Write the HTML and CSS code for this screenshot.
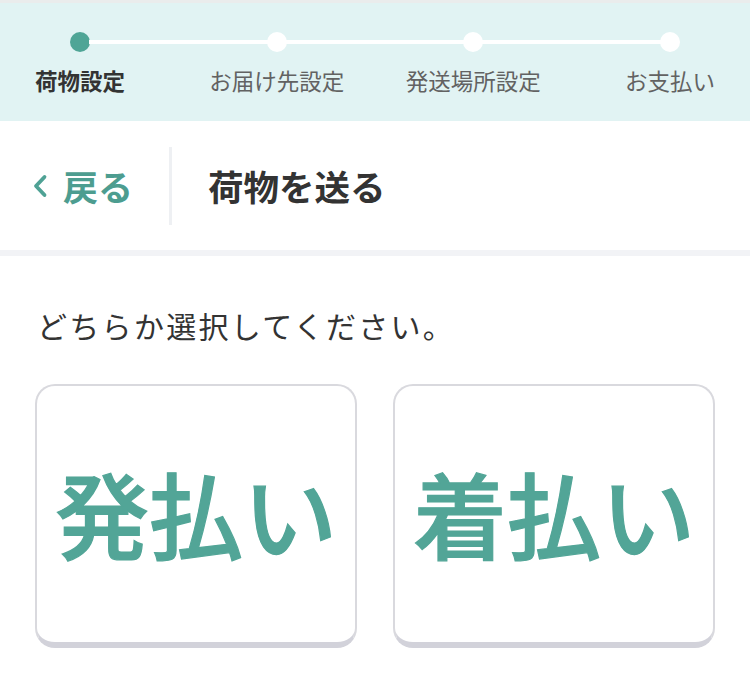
FILE: index.html
```html
<!DOCTYPE html>
<html lang="ja">
<head>
<meta charset="utf-8">
<title>荷物を送る</title>
<link rel="stylesheet" href="styles.css">
</head>
<body>
<div class="topline"></div>
<section class="stepper">
  <div class="track">
    <span class="dot active"></span><span class="seg"></span>
    <span class="dot"></span><span class="seg"></span>
    <span class="dot"></span><span class="seg"></span>
    <span class="dot"></span>
  </div>
  <div class="labels">
    <div class="step"><span class="label active">荷物設定</span></div>
    <div class="step"><span class="label">お届け先設定</span></div>
    <div class="step"><span class="label">発送場所設定</span></div>
    <div class="step"><span class="label">お支払い</span></div>
  </div>
</section>
<header class="header">
  <a class="back">
    <svg class="chev" width="16" height="26" viewBox="0 0 16 26"><polyline points="12.5,4 4,13 12.5,22" fill="none" stroke="#4fa295" stroke-width="3.8" stroke-linecap="round" stroke-linejoin="round"/></svg>
    <span class="back-text">戻る</span>
  </a>
  <div class="divider"></div>
  <h1 class="title">荷物を送る</h1>
</header>
<main class="content">
  <p class="prompt">どちらか選択してください。</p>
  <div class="choices">
    <button class="card">発払い</button>
    <button class="card">着払い</button>
  </div>
</main>
</body>
</html>
```
FILE: styles.css
```css
html, body {
  margin: 0;
  padding: 0;
  background: #ffffff;
  font-family: "Noto Sans CJK JP", "Noto Sans", sans-serif;
  color: #333333;
}

.topline {
  height: 3px;
  background: #eaecec;
}

.stepper {
  background: #e1f3f3;
  padding: 29px 0 26px;
}

.track {
  display: flex;
  align-items: center;
  padding: 0 70px;
}

.dot {
  width: 20px;
  height: 20px;
  border-radius: 50%;
  background: #ffffff;
  flex: none;
}

.dot.active {
  background: #4fa596;
}

.seg {
  flex: 1;
  height: 4px;
  background: #ffffff;
  margin: 0 -1px;
}

.labels {
  display: flex;
  justify-content: space-between;
  padding: 0 80px;
  margin-top: 13px;
}

.step {
  width: 0;
  display: flex;
  justify-content: center;
}

.label {
  white-space: nowrap;
  font-size: 22.5px;
  line-height: 30px;
  color: #626262;
}

.label.active {
  font-weight: 700;
  color: #333333;
}

.header {
  height: 129px;
  display: flex;
  align-items: center;
  border-bottom: 6px solid #f2f3f6;
}

.back {
  display: flex;
  align-items: center;
  padding-left: 32px;
  gap: 15px;
  color: #4d9d90;
}

.chev {
  display: block;
}

.back-text {
  font-size: 35px;
  font-weight: 700;
  line-height: 1;
}

.divider {
  width: 3px;
  height: 78px;
  background: #eef0f3;
  margin-left: 36px;
}

.title {
  margin: 0 0 0 36px;
  font-size: 35.5px;
  font-weight: 700;
  line-height: 1;
  color: #333333;
}

.content {
  padding: 0 35px;
}

.prompt {
  margin: 48px 0 0 2px;
  font-size: 30px;
  line-height: 42px;
  letter-spacing: 2.3px;
  color: #333333;
}

.choices {
  margin-top: 38px;
  display: grid;
  grid-template-columns: 1fr 1fr;
  gap: 36px;
}

.card {
  height: 264px;
  box-sizing: border-box;
  background: #ffffff;
  border: 2px solid #d9d9de;
  border-bottom-width: 6px;
  border-bottom-color: #d2d2da;
  border-radius: 20px;
  font-family: "Noto Sans CJK JP", "Noto Sans", sans-serif;
  font-size: 94px;
  font-weight: 500;
  -webkit-text-stroke: 1.2px #52a597;
  color: #52a597;
  display: flex;
  align-items: center;
  justify-content: center;
  padding: 0 0 4px;
  letter-spacing: 0;
}
```
